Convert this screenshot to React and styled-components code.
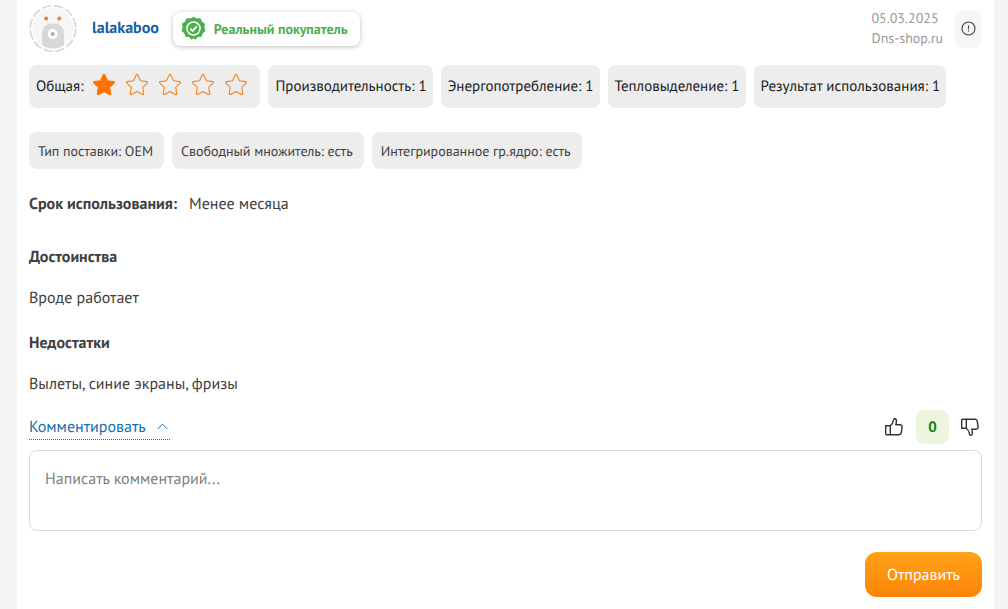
import React from 'react';
import styled, { createGlobalStyle } from 'styled-components';

const RATINGS = [
  { label: 'Производительность', value: 1 },
  { label: 'Энергопотребление', value: 1 },
  { label: 'Тепловыделение', value: 1 },
  { label: 'Результат использования', value: 1 },
];

const PROPS = [
  { label: 'Тип поставки', value: 'OEM' },
  { label: 'Свободный множитель', value: 'есть' },
  { label: 'Интегрированное гр.ядро', value: 'есть' },
];

const GlobalStyle = createGlobalStyle`
  * {
    box-sizing: border-box;
  }

  body {
    margin: 0;
    background: #f5f5f5;
    color: #404040;
    font: 16px/24px 'PT Sans', 'Noto Sans', sans-serif;
    text-rendering: geometricPrecision;
  }

  button,
  textarea {
    font-family: inherit;
    text-rendering: inherit;
  }
`;

const Review = styled.article`
  min-height: 100vh;
  margin: 0 14px 0 17px;
  padding: 5px 12px 12px;
  background: #ffffff;
`;

const Header = styled.header`
  display: flex;
  align-items: center;
  height: 47px;
`;

const Author = styled.a`
  margin: 0 14px 2px 15px;
  color: #1660a5;
  font-size: 16px;
  font-weight: 700;
  text-decoration: none;
`;

const Buyer = styled.div`
  display: flex;
  align-items: center;
  gap: 8px;
  height: 34px;
  padding: 0 12px 0 8px;
  border-radius: 8px;
  box-shadow: 0 1px 5px rgba(0, 0, 0, 0.25);
  color: #4caf50;
  font-size: 14px;
  font-weight: 700;
`;

const Source = styled.div`
  margin: 0 12px 2px auto;
  color: #999999;
  font-size: 14px;
  line-height: 20px;
`;

const ReportButton = styled.button`
  display: flex;
  align-items: center;
  justify-content: center;
  width: 27px;
  height: 38px;
  padding: 0;
  border: 0;
  border-radius: 8px;
  background: #f6f6f6;
  color: #404040;
`;

const Chips = styled.div`
  display: flex;
  flex-wrap: wrap;
  gap: 8px;
  margin-top: ${p => (p.$small ? 24 : 13)}px;
`;

const Chip = styled.div`
  display: flex;
  align-items: center;
  height: ${p => (p.$small ? 37 : 43)}px;
  padding: ${p => (p.$small ? '0 11px 0 9px' : '0 6px 0 7px')};
  border-radius: 8px;
  background: #ededed;
  color: ${p => (p.$small ? '#404040' : '#1a1a1a')};
  font-size: ${p => (p.$small ? 14 : 15)}px;
  white-space: nowrap;
`;

const Stars = styled.span`
  display: flex;
  gap: 9px;
  margin: 0 6px 4px 9px;
`;

const Term = styled.p`
  display: flex;
  gap: 12px;
  margin: 23px 0 29px;
`;

const Title = styled.h3`
  margin: 0 0 17px;
  font-size: 16px;
  line-height: 24px;
`;

const Text = styled.p`
  margin: 0 0 ${p => (p.$last ? 14 : 21)}px;
`;

const Actions = styled.div`
  display: flex;
  align-items: center;
  height: 34px;
  padding-right: 2px;
`;

const CommentLink = styled.a`
  display: flex;
  align-items: center;
  gap: 11px;
  margin-right: auto;
  padding-right: 2px;
  border-bottom: 1px dotted #1a6dac;
  color: #1a6dac;
  text-decoration: none;
`;

const VoteButton = styled.button`
  display: flex;
  padding: 0;
  border: 0;
  background: none;
  color: #333333;
`;

const Votes = styled.output`
  height: 34px;
  width: 33px;
  margin: 0 11px 0 12px;
  border-radius: 8px;
  background: #ecf6df;
  color: #118011;
  font-size: 15px;
  font-weight: 700;
  line-height: 36px;
  text-align: center;
`;

const CommentInput = styled.textarea`
  display: block;
  width: 100%;
  height: 81px;
  margin: 6px 0 21px;
  padding: 16px 15px;
  border: 1px solid #d9d9d9;
  border-radius: 8px;
  color: #333333;
  font-size: 16px;
  line-height: 24px;
  resize: none;

  &::placeholder {
    color: #808080;
  }
`;

const SubmitButton = styled.button`
  display: block;
  height: 45px;
  margin-left: auto;
  padding: 0 22px;
  border: 0;
  border-radius: 12px;
  background: linear-gradient(#ffa218, #fc8507);
  color: #ffffff;
  font-size: 16px;
`;

const Star = ({ filled }) => (
  <svg width="24" height="24" viewBox="0 0 24 24" aria-hidden="true">
    <path
      d="M11.2 2.1q.8-1.4 1.6 0l2.7 5.6 6.1.9q1.5.3.5 1.5l-4.4 4.3 1 6.1q.2 1.5-1.2.9L12 18.5l-5.5 2.9q-1.4.6-1.2-.9l1-6.1-4.4-4.3q-1-1.2.5-1.5l6.1-.9z"
      fill={filled ? '#ff7300' : 'none'}
      stroke={filled ? '#ff7300' : '#f58220'}
      strokeWidth="1.1"
      strokeLinejoin="round"
    />
  </svg>
);

const Avatar = () => (
  <svg width="48" height="48" viewBox="0 0 48 48" aria-hidden="true">
    <circle cx="24" cy="23.5" r="20.5" fill="#f6f6f6" />
    <circle
      cx="24"
      cy="23.5"
      r="22.8"
      fill="none"
      stroke="#d5d5d5"
      strokeWidth="1.6"
      strokeDasharray="9.4 2.54"
    />
    <path d="M18 15l2 6M30 15l-2 6" stroke="#e4e4e4" />
    <path
      d="M13 40V30c0-8 4-11.5 11-11.5S35 22 35 30v10c-6 4.6-16 4.6-22 0z"
      fill="#d8d8d8"
    />
    <circle cx="17.2" cy="13.5" r="2.1" fill="#e98a26" />
    <circle cx="30.3" cy="13.5" r="2.1" fill="#e98a26" />
    <circle cx="23.7" cy="29" r="4.9" fill="#ffffff" />
    <circle cx="23.7" cy="29" r="2" fill="#aaaaaa" />
  </svg>
);

const BuyerIcon = () => (
  <svg width="25" height="25" viewBox="0 0 24 24" aria-hidden="true">
    <path
      d="M12 1.5l3 1.3 3.3-.1 1.5 3 2.6 2-.4 3.3 1 3.2-2.6 2-1 3.2-3.3.3L14 22l-2-1-2 1-2.1-2.3-3.3-.3-1-3.2-2.6-2 1-3.2-.4-3.3 2.6-2 1.5-3 3.3.1z"
      fill="#4caf50"
      stroke="#4caf50"
      strokeLinejoin="round"
    />
    <circle cx="12" cy="12" r="6.3" fill="none" stroke="#fff" strokeWidth="1.4" />
    <path d="M9 12.2l2.2 2.1 4-4.3" fill="none" stroke="#fff" strokeWidth="1.8" />
  </svg>
);

const ReportIcon = () => (
  <svg width="15" height="15" viewBox="0 0 15 15" aria-hidden="true">
    <circle cx="7.5" cy="7.5" r="6.5" fill="none" stroke="currentColor" strokeWidth="1.1" />
    <path d="M7.5 4.5v3.8M7.5 9.3v1.2" stroke="currentColor" strokeWidth="1.1" />
  </svg>
);

const Chevron = () => (
  <svg width="11" height="7" viewBox="0 0 11 7" aria-hidden="true">
    <path d="M.7 6l4.8-4.8L10.3 6" fill="none" stroke="currentColor" />
  </svg>
);

const Thumb = ({ down }) => (
  <svg width="20" height="20" viewBox="0 0 20 20" aria-hidden="true">
    <path
      d="M1.7 8.7h4.6v9H2.7c-.6 0-1-.4-1-1zM6.3 8.7c2-1.4 2.8-3.5 3.1-5.4.2-1.2.8-1.7 1.6-1.5 1.5.4 1.7 2.2 1.2 4.2l-.4 1.8h4.4c1.4 0 2 .9 1.9 2l-.8 5.9c-.2 1.4-1 2-2.2 2H6.3"
      transform={down ? 'matrix(1 0 0 -1 0 20)' : undefined}
      fill="none"
      stroke="currentColor"
      strokeWidth="1.4"
      strokeLinejoin="round"
    />
  </svg>
);

export default function App() {
  const [comment, setComment] = React.useState('');

  return (
    <>
      <GlobalStyle />

      <Review>
        <Header>
          <Avatar />
          <Author href="#author">lalakaboo</Author>

          <Buyer>
            <BuyerIcon />
            Реальный покупатель
          </Buyer>

          <Source>
            <div>05.03.2025</div>
            <div>Dns-shop.ru</div>
          </Source>

          <ReportButton type="button" aria-label="Пожаловаться">
            <ReportIcon />
          </ReportButton>
        </Header>

        <Chips>
          <Chip>
            Общая:
            <Stars>
              {[1, 2, 3, 4, 5].map(n => (
                <Star key={n} filled={n === 1} />
              ))}
            </Stars>
          </Chip>

          {RATINGS.map(({ label, value }) => (
            <Chip key={label}>
              {label}: {value}
            </Chip>
          ))}
        </Chips>

        <Chips $small>
          {PROPS.map(({ label, value }) => (
            <Chip key={label} $small>
              {label}: {value}
            </Chip>
          ))}
        </Chips>

        <Term>
          <b>Срок использования:</b>
          <span>Менее месяца</span>
        </Term>

        <Title>Достоинства</Title>
        <Text>Вроде работает</Text>

        <Title>Недостатки</Title>
        <Text $last>Вылеты, синие экраны, фризы</Text>

        <Actions>
          <CommentLink href="#comment">
            Комментировать
            <Chevron />
          </CommentLink>

          <VoteButton type="button" aria-label="Нравится">
            <Thumb />
          </VoteButton>
          <Votes>0</Votes>
          <VoteButton type="button" aria-label="Не нравится">
            <Thumb down />
          </VoteButton>
        </Actions>

        <CommentInput
          id="comment"
          aria-label="Комментарий"
          placeholder="Написать комментарий..."
          value={comment}
          onChange={e => setComment(e.target.value)}
        />

        <SubmitButton type="button">Отправить</SubmitButton>
      </Review>
    </>
  );
}
